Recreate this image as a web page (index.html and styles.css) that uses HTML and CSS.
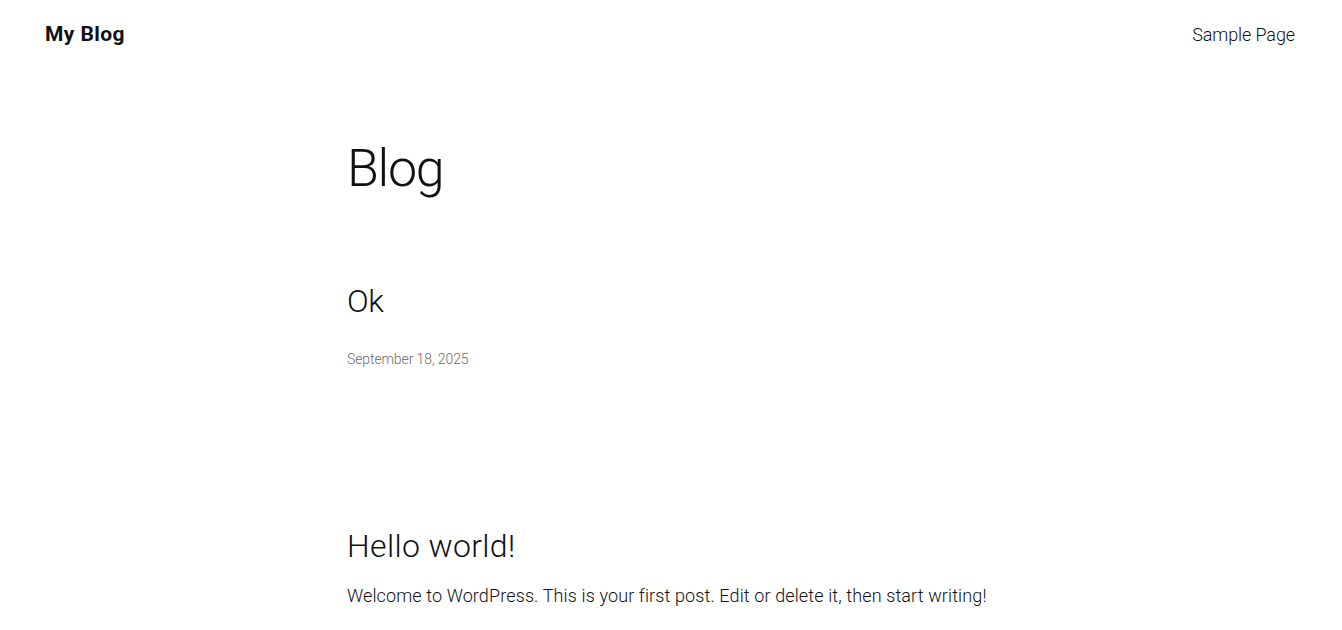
FILE: index.html
```html
<!DOCTYPE html>
<html lang="en">
<head>
<meta charset="utf-8">
<title>My Blog</title>
<link rel="stylesheet" href="styles.css">
</head>
<body>
<header class="site-header">
  <a class="site-title" href="#">My Blog</a>
  <nav class="site-nav"><a href="#">Sample Page</a></nav>
</header>
<main class="content">
  <h1 class="page-title">Blog</h1>
  <article class="post">
    <h2 class="post-title">Ok</h2>
    <div class="post-date">September 18, 2025</div>
  </article>
  <article class="post post-second">
    <h2 class="post-title post-title-wide">Hello world!</h2>
    <p class="post-excerpt">Welcome to WordPress. This is your first post. Edit or delete it, then start writing!</p>
  </article>
</main>
</body>
</html>
```

FILE: styles.css
```css
* { box-sizing: border-box; }
html, body { margin: 0; padding: 0; background: #fff; }
body {
  font-family: Roboto, "Noto Sans", sans-serif;
  font-weight: 300;
  color: #111;
  font-size: 18px;
  letter-spacing: -0.1px;
}
a { color: inherit; text-decoration: none; }
.site-header {
  display: flex;
  justify-content: space-between;
  align-items: center;
  padding: 0 47px 0 45px;
  height: 68px;
}
.site-title {
  font-weight: 700;
  font-size: 21px;
  letter-spacing: 0.4px;
}
.site-nav { font-size: 18px; }
.content {
  width: 648px;
  margin: 0 auto;
}
.page-title {
  font-weight: 300;
  font-size: 52px;
  margin: 70px 0 0;
  line-height: 1.2;
  letter-spacing: -1.3px;
}
.post { margin-top: 82px; }
.post-title {
  font-weight: 300;
  font-size: 32px;
  line-height: 1.2;
  margin: 0;
  letter-spacing: -0.3px;
}
.post-title-wide { letter-spacing: 0.35px; }
.post-date {
  margin-top: 30px;
  font-size: 14px;
  color: #6b6b6b;
  letter-spacing: -0.1px;
}
.post-second { margin-top: 160px; }
.post-excerpt {
  margin: 20px 0 0;
  letter-spacing: 0.12px;
}
```
